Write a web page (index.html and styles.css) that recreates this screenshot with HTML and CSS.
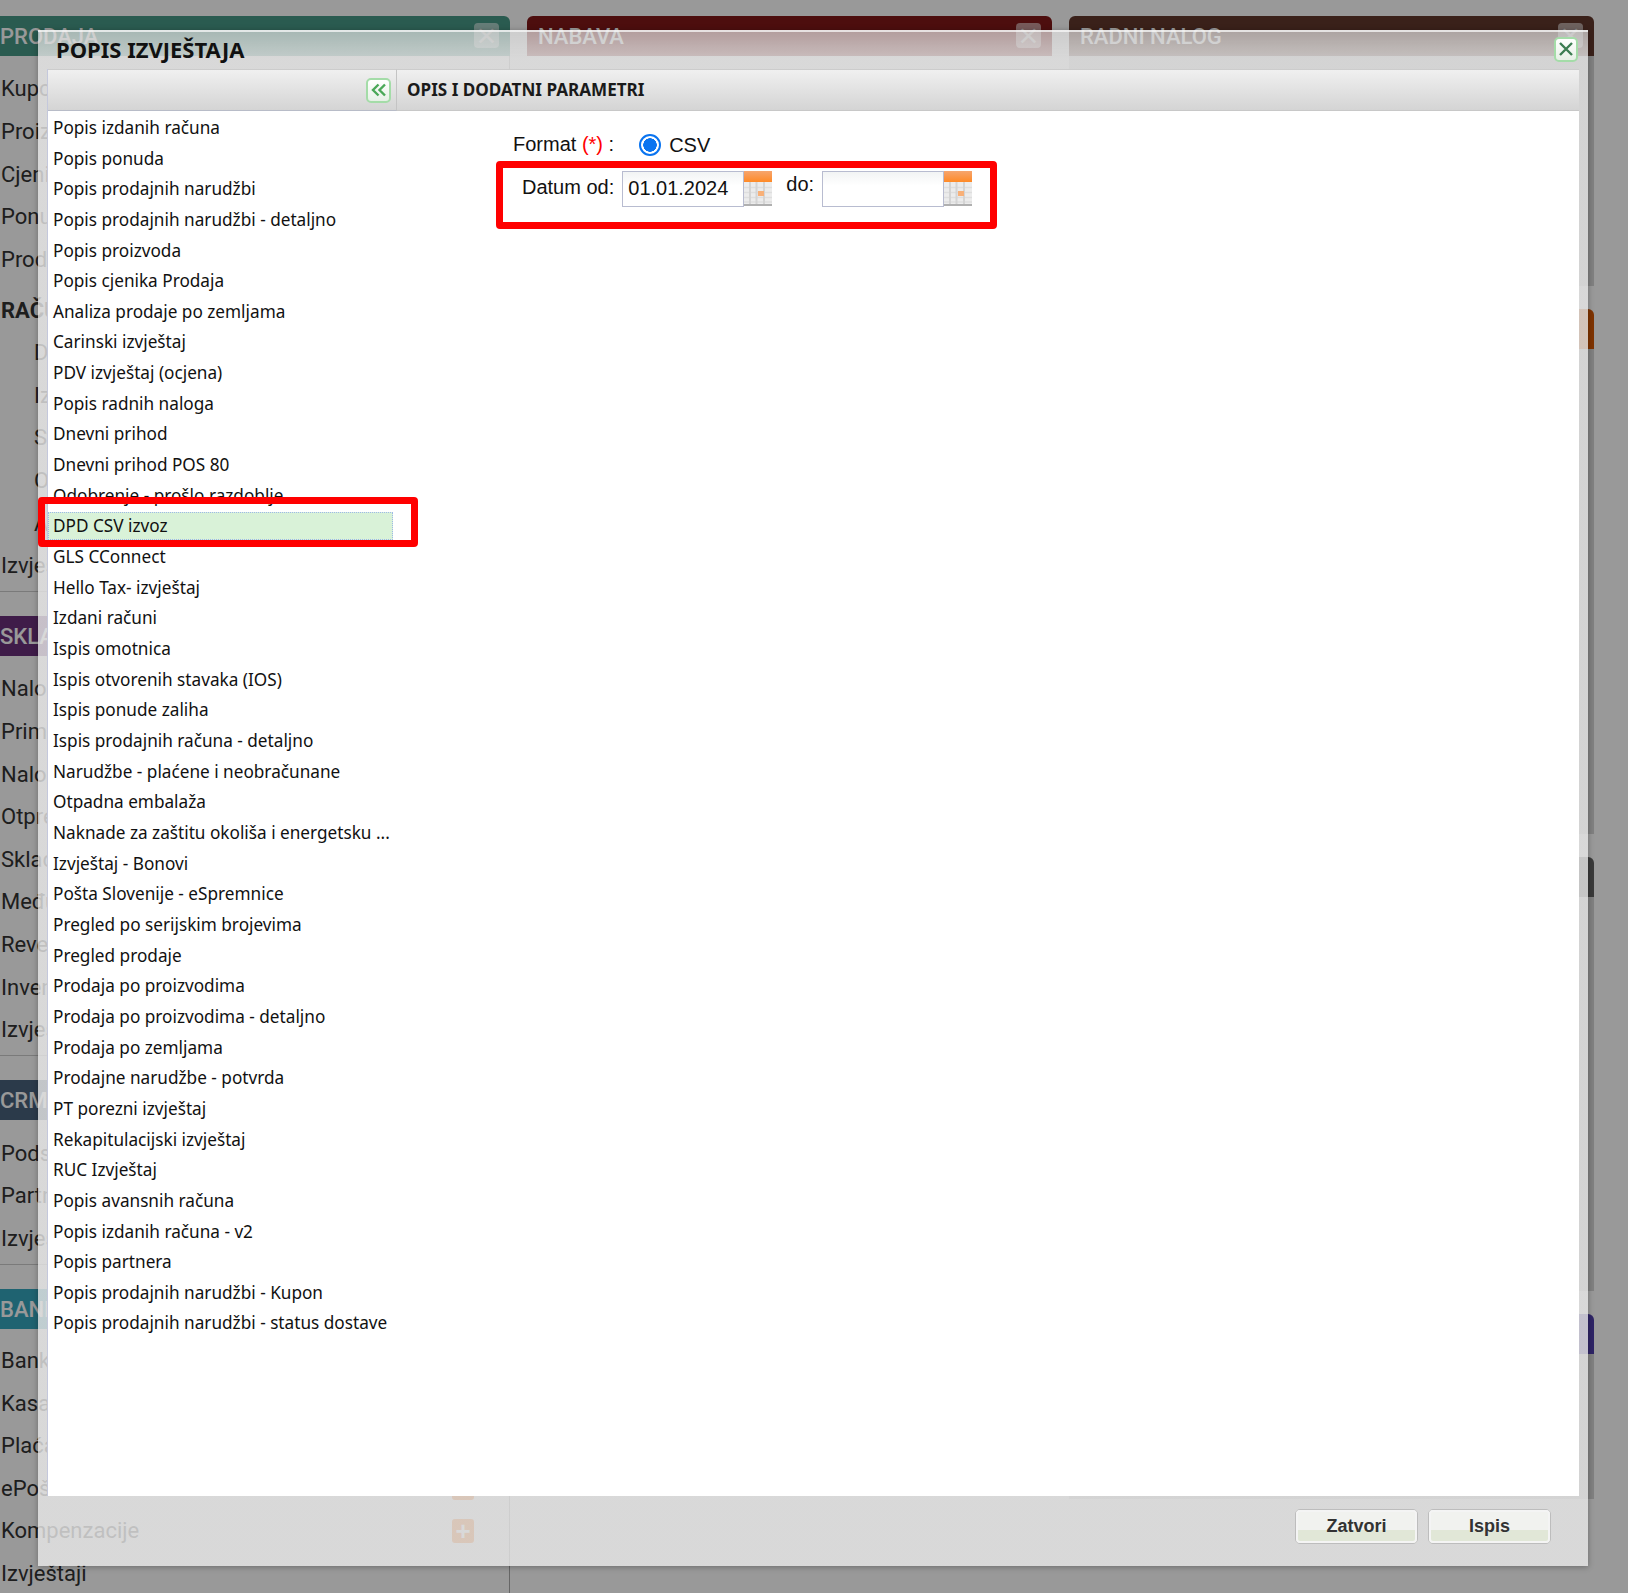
FILE: index.html
```html
<!DOCTYPE html>
<html lang="hr">
<head>
<meta charset="utf-8">
<title>Popis izvještaja</title>
<link rel="stylesheet" href="styles.css">
</head>
<body>
<main class="page">
  <section class="col">
    <article class="panel">
      <h2 class="panel-head green">PRODAJA<span class="mini-close">×</span></h2>
      <div class="panel-body">
        <div class="row">Kupci</div><div class="row">Proizvodi</div><div class="row">Cjenici</div><div class="row">Ponude</div><div class="row">Prodajne narudžbe</div>
        <div class="row sub-title">RAČUNI</div>
        <div class="row sub">Dnevnik</div><div class="row sub">Izdani</div><div class="row sub">Storno</div><div class="row sub">Odobrenja</div><div class="row sub">Avansi</div>
        <div class="row">Izvještaji</div>
      </div>
    </article>
    <article class="panel">
      <h2 class="panel-head plum">SKLADIŠTE</h2>
      <div class="panel-body">
        <div class="row">Nalozi</div><div class="row">Primke</div><div class="row">Nalozi</div><div class="row">Otpremnice</div><div class="row">Skladišta</div><div class="row">Međuskladišnice</div><div class="row">Revers</div><div class="row">Inventura</div><div class="row">Izvještaji</div>
      </div>
    </article>
    <article class="panel">
      <h2 class="panel-head slate">CRM</h2>
      <div class="panel-body">
        <div class="row">Podsjetnici</div><div class="row">Partneri</div><div class="row">Izvještaji</div>
      </div>
    </article>
    <article class="panel">
      <h2 class="panel-head teal">BANKA</h2>
      <div class="panel-body open">
        <div class="row">Banka</div><div class="row">Kasa</div><div class="row">Plaćanja</div>
        <div class="row">ePošta<span class="plus">+</span></div>
        <div class="row">Kompenzacije<span class="plus">+</span></div>
        <div class="row">Izvještaji</div>
      </div>
    </article>
  </section>
  <section class="col">
    <article class="panel">
      <h2 class="panel-head maroon">NABAVA<span class="mini-close">×</span></h2>
      <div class="panel-body open plain"></div>
    </article>
  </section>
  <section class="col">
    <article class="panel">
      <h2 class="panel-head brown">RADNI NALOG<span class="mini-close">×</span></h2>
      <div class="panel-body tinted h-a"></div>
    </article>
    <article class="panel">
      <h2 class="panel-head rust"></h2>
      <div class="panel-body tinted h-b"></div>
    </article>
    <article class="panel">
      <h2 class="panel-head graphite"></h2>
      <div class="panel-body tinted h-c"></div>
    </article>
    <article class="panel">
      <h2 class="panel-head indigo"></h2>
      <div class="panel-body tinted h-d"></div>
    </article>
  </section>
</main>
<div class="overlay"></div>

<div class="dialog">
  <header class="dialog-title">
    <h1>POPIS IZVJEŠTAJA</h1>
    <button class="icon-btn close-btn" aria-label="Zatvori">
      <svg viewBox="0 0 16 16" width="16" height="16"><path d="M2 2 14 14M14 2 2 14" fill="none" stroke="#3c7d52" stroke-width="2.400"/></svg>
    </button>
  </header>
  <div class="panes">
    <aside class="list-pane">
      <div class="pane-head list-head">
        <button class="icon-btn collapse-btn" aria-label="Sakrij">
          <svg viewBox="0 0 16 14" width="16" height="14"><path d="M7.500 1.500 2 7l5.500 5.500M14 1.500 8.500 7l5.500 5.500" fill="none" stroke="#4aa858" stroke-width="2.400"/></svg>
        </button>
      </div>
      <ul class="report-list">
        <li>Popis izdanih računa</li>
        <li>Popis ponuda</li>
        <li>Popis prodajnih narudžbi</li>
        <li>Popis prodajnih narudžbi - detaljno</li>
        <li>Popis proizvoda</li>
        <li>Popis cjenika Prodaja</li>
        <li>Analiza prodaje po zemljama</li>
        <li>Carinski izvještaj</li>
        <li>PDV izvještaj (ocjena)</li>
        <li>Popis radnih naloga</li>
        <li>Dnevni prihod</li>
        <li>Dnevni prihod POS 80</li>
        <li>Odobrenje - prošlo razdoblje</li>
        <li class="selected">DPD CSV izvoz</li>
        <li>GLS CConnect</li>
        <li>Hello Tax- izvještaj</li>
        <li>Izdani računi</li>
        <li>Ispis omotnica</li>
        <li>Ispis otvorenih stavaka (IOS)</li>
        <li>Ispis ponude zaliha</li>
        <li>Ispis prodajnih računa - detaljno</li>
        <li>Narudžbe - plaćene i neobračunane</li>
        <li>Otpadna embalaža</li>
        <li>Naknade za zaštitu okoliša i energetsku ...</li>
        <li>Izvještaj - Bonovi</li>
        <li>Pošta Slovenije - eSpremnice</li>
        <li>Pregled po serijskim brojevima</li>
        <li>Pregled prodaje</li>
        <li>Prodaja po proizvodima</li>
        <li>Prodaja po proizvodima - detaljno</li>
        <li>Prodaja po zemljama</li>
        <li>Prodajne narudžbe - potvrda</li>
        <li>PT porezni izvještaj</li>
        <li>Rekapitulacijski izvještaj</li>
        <li>RUC Izvještaj</li>
        <li>Popis avansnih računa</li>
        <li>Popis izdanih računa - v2</li>
        <li>Popis partnera</li>
        <li>Popis prodajnih narudžbi - Kupon</li>
        <li>Popis prodajnih narudžbi - status dostave</li>
      </ul>
    </aside>
    <section class="detail-pane">
      <div class="pane-head detail-head">OPIS I DODATNI PARAMETRI</div>
      <form class="params">
        <div class="format-row">
          <span class="format-label">Format <span class="req">(*)</span> :</span>
          <span class="radio"></span>
          <span class="radio-label">CSV</span>
        </div>
        <div class="date-row">
          <label class="date-from">Datum od:</label>
          <input class="date-input" type="text" value="01.01.2024">
          <svg class="cal" viewBox="0 0 28 35"><use href="#calendar"/></svg>
          <label class="date-to">do:</label>
          <input class="date-input" type="text" value="">
          <svg class="cal" viewBox="0 0 28 35"><use href="#calendar"/></svg>
        </div>
      </form>
    </section>
  </div>
  <footer class="dialog-foot">
    <button class="action" type="button">Zatvori</button>
    <button class="action" type="button">Ispis</button>
  </footer>
</div>

<div class="mark mark-row"></div>
<div class="mark mark-form"></div>

<svg class="defs" width="0" height="0" aria-hidden="true">
  <defs>
    <linearGradient id="cal-top" x1="0" y1="0" x2="0" y2="1">
      <stop offset="0" stop-color="#f6a56e"/>
      <stop offset="1" stop-color="#ff8a26"/>
    </linearGradient>
  </defs>
  <symbol id="calendar" viewBox="0 0 28 35">
    <rect x="0" y="0" width="28" height="11" fill="url(#cal-top)"/>
    <rect x="0" y="11" width="28" height="22" fill="#ececec"/>
    <path d="M0 16.500H28M0 21.500H28M0 26.500H28M0 31H28" stroke="#dedede" stroke-width="1.500"/>
    <path d="M6 11V33M12.500 11V33M20 11V33" stroke="#d4d4d4" stroke-width="2"/>
    <rect x="14" y="20" width="6" height="5" fill="#f8b078"/>
    <rect x="0" y="33" width="28" height="2" fill="#b0b0b0"/>
  </symbol>
</svg>
</body>
</html>
```

FILE: styles.css
```css
* { box-sizing: border-box; }
html, body { margin: 0; height: 100%; }
body {
  position: relative;
  width: 1628px;
  height: 1593px;
  overflow: hidden;
  background: #fff;
  font-family: Roboto, "Liberation Sans", sans-serif;
  color: #333;
}
.page {
  display: grid;
  grid-template-columns: repeat(3, 525px);
  column-gap: 17px;
  margin-left: -15px;
  padding-top: 16px;
  height: 1593px;
}
.col { display: flex; flex-direction: column; gap: 24px; min-height: 0; }
.col:nth-child(2), .col:nth-child(3) { gap: 23px; }
.panel { display: flex; flex-direction: column; }
.panel:last-child { flex: 1; }
.panel-head {
  position: relative;
  margin: 0;
  height: 40px;
  padding: 1px 11px 0 15px;
  border-radius: 6px 6px 0 0;
  font-size: 22px;
  font-weight: 500;
  line-height: 40px;
  color: #fff;
}
.col + .col .panel-head { padding-left: 11px; }
.green { background: #469885; }
.plum { background: #692f7b; }
.slate { background: #48617c; }
.teal { background: #34a5bd; }
.maroon { background: #801818; }
.brown { background: #61372c; }
.rust { background: #d45500; }
.graphite { background: #616161; }
.indigo { background: #4e3caa; }
.mini-close {
  position: absolute;
  top: 7px;
  right: 11px;
  width: 25px;
  height: 25px;
  border-radius: 4px;
  background: rgba(255,255,255,.55);
  color: rgba(255,255,255,.8);
  font: 34px/25px "Liberation Sans", sans-serif;
  text-align: center;
}
.panel-body {
  padding: 11.700px 0 4px 15px;
  border-bottom: 1px solid #ccc;
  border-left: 1px solid #ccc;
  border-right: 1px solid #aaa;
  background: #fff;
}
.panel-body.open { flex: 1; border-bottom: 0; padding-top: 10.700px; }
.panel-body.plain { border: 0; }
.panel-body.tinted { background: #d8d8d8; padding: 0; border: 0; }
.h-a { height: 230px; }
.h-b { height: 485px; }
.h-c { height: 394px; }
.h-d { height: 145px; }
.row {
  display: flex;
  align-items: center;
  justify-content: space-between;
  height: 42.600px;
  padding-right: 35px;
  font-size: 22px;
  white-space: nowrap;
}
.sub-title { margin-top: 8.200px; font-weight: 700; }
.sub { padding-left: 33px; }
.plus {
  width: 22px;
  height: 24px;
  border-radius: 3px;
  background: #ff6a00;
  color: #fff;
  font: 700 26px/24px "Liberation Sans", sans-serif;
  text-align: center;
}
.overlay {
  position: absolute;
  inset: 0;
  background: rgba(0,0,0,.4);
}
.dialog {
  position: absolute;
  left: 38px;
  top: 30px;
  width: 1550px;
  height: 1536px;
  display: flex;
  flex-direction: column;
  background: linear-gradient(rgba(232,232,232,.66), rgba(232,232,232,.8) 26px);
  border-top: 2px solid rgba(255,255,255,.55);
  box-shadow: 0 1px 6px rgba(0,0,0,.3);
}
.dialog-title {
  display: flex;
  align-items: center;
  justify-content: space-between;
  flex: none;
  height: 37px;
  padding: 0 10px 0 18px;
}
.dialog-title h1 {
  margin: -4px 0 0;
  font: 700 22px/1 "Noto Sans", sans-serif;
  color: #111;
}
.icon-btn {
  display: flex;
  align-items: center;
  justify-content: center;
  padding: 0;
  border: 2px solid #a4dca8;
  border-radius: 5px;
  background: linear-gradient(#fff, #e6f0e6);
}
.close-btn { width: 24px; height: 25px; margin-top: -3px; }
.collapse-btn { width: 25px; height: 25px; }
.panes { display: flex; flex: 1; min-height: 0; margin: 0 9px; background: #fff; }
.list-pane { display: flex; flex-direction: column; flex: none; width: 350px; border-left: 1px solid #c4c8dc; }
.detail-pane { display: flex; flex-direction: column; flex: 1; }
.pane-head {
  flex: none;
  height: 42px;
  background: linear-gradient(#f0f0f0, #d4d4d4);
  border-top: 1px solid #ccc;
  border-bottom: 1px solid #c8c8c8;
}
.list-head {
  display: flex;
  align-items: center;
  justify-content: flex-end;
  padding-right: 5px;
  border-right: 1px solid #c4c4c4;
  border-bottom-color: #b8bcc8;
}
.detail-head {
  padding-left: 10px;
  font: 700 17.100px/40px "Noto Sans", sans-serif;
  color: #1a1a1a;
}
.report-list {
  display: flex;
  flex-direction: column;
  gap: 3px;
  margin: 0;
  padding: 2.900px 0 0;
  list-style: none;
}
.report-list li {
  width: 345px;
  height: 27.670px;
  padding-left: 4px;
  border: 1px solid transparent;
  font: 17.200px/25.670px "Noto Sans", sans-serif;
  color: #111;
  white-space: nowrap;
}
.report-list .selected { background: #d9f2d8; border: 1px dotted #9db8e8; }
.params { padding: 18px 0 0 116px; font: 20px "Liberation Sans", sans-serif; color: #111; }
.format-row { display: flex; align-items: center; height: 31px; }
.req { color: #f00; }
.radio {
  width: 22px;
  height: 22px;
  margin-left: 25px;
  border: 2px solid #0a74f0;
  border-radius: 50%;
  background: radial-gradient(circle, #0a74f0 0 6.500px, #fff 7px);
}
.radio-label { margin: 2px 0 0 8px; }
.date-row { display: flex; align-items: flex-start; margin-top: 11px; padding-left: 9px; }
.date-from { margin: 5px 8px 0 0; }
.date-to { margin: 2px 8px 0 14px; }
.date-input {
  width: 122px;
  height: 36px;
  padding: 0 5px 2px;
  border: 1px solid #b8bcd0;
  background: linear-gradient(#f2f4f4, #fff 40%);
  font: 20px "Liberation Sans", sans-serif;
  color: #111;
}
.cal { flex: none; width: 28px; height: 35px; }
.defs { position: absolute; }
.dialog-foot {
  display: flex;
  flex: none;
  align-items: flex-start;
  justify-content: flex-end;
  gap: 10px;
  height: 70px;
  padding: 13px 37px 0 0;
}
.action {
  width: 123px;
  height: 35px;
  padding: 0;
  border: 1px solid #bdbdbd;
  border-radius: 5px;
  outline: 2px solid #f4f4f4;
  outline-offset: -3px;
  background: linear-gradient(#f1f2ef 60%, #e1e7d7 60%);
  font: 700 18px "Liberation Sans", sans-serif;
  color: #333;
}
.mark { position: absolute; border: 7px solid #f00; border-radius: 4px; }
.mark-row { left: 38px; top: 497px; width: 380px; height: 50px; }
.mark-form { left: 496px; top: 161px; width: 501px; height: 68px; }
```
